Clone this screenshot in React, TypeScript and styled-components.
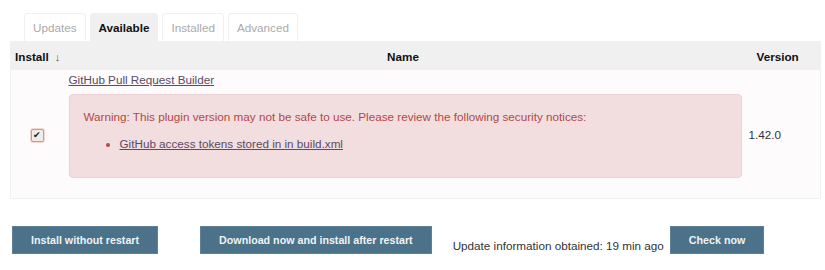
import styled, { createGlobalStyle } from "styled-components"

const Global = createGlobalStyle`
  body {
    margin: 0;
    background: #fff;
    font-family: "Liberation Sans", Arial, sans-serif;
    font-size: 11.7px;
    color: #333;
  }
`

const Page = styled.div`
  padding: 13px 4px 0 10px;
`

const Tabs = styled.div`
  display: flex;
  gap: 4px;
  padding-left: 14px;
`

const Tab = styled.div<{ $active?: boolean }>`
  height: 28px;
  box-sizing: border-box;
  padding: 0 8px;
  display: flex;
  align-items: center;
  border: 1px solid #f0f0f0;
  border-bottom: none;
  border-radius: 4px 4px 0 0;
  background: ${p => (p.$active ? "#f0f0f0" : "#fff")};
  color: ${p => (p.$active ? "#111" : "#aaa")};
  font-weight: ${p => (p.$active ? "bold" : "normal")};
`

const Table = styled.table`
  width: 811px;
  border-collapse: collapse;
  border: 1px solid #f0f0f0;
  table-layout: fixed;
`

const Th = styled.th<{ $align?: string; $pad?: string }>`
  background: #f0f0f0;
  height: 28px;
  padding: ${p => p.$pad || "0 4px"};
  text-align: ${p => p.$align || "left"};
  font-weight: bold;
  color: #111;
  white-space: nowrap;
`

const Arrow = styled.span`
  font-weight: normal;
  font-size: 11px;
  margin-left: 6px;
  color: #555;
`

const Td = styled.td<{ $align?: string }>`
  background: #fdfbfb;
  vertical-align: middle;
  text-align: ${p => p.$align || "left"};
  padding: 0 4px;
`

const NameCell = styled.td`
  background: #fdfbfb;
  padding: 3px 4px 20px 7px;
`

const Link = styled.a`
  color: #5b4a68;
  text-decoration: underline;
  cursor: pointer;
`

const Check = styled.span`
  display: inline-flex;
  align-items: center;
  justify-content: center;
  width: 11px;
  height: 11px;
  margin-left: 2px;
  border: 1px solid #c99a8c;
  border-radius: 2px;
  background: #ececec;
  font-size: 9px;
  color: #222;
  line-height: 1;
  box-shadow: 0 0 0 1px #f1d8d0;
`

const Warning = styled.div`
  margin-top: 8px;
  width: 673px;
  box-sizing: border-box;
  height: 84px;
  background: #f2dede;
  border: 1px solid #ecd2d5;
  border-radius: 4px;
  padding: 15px 14px;
  color: #b0494a;
`

const Notices = styled.ul`
  margin: 14px 0 0;
  padding-left: 36px;
  li::marker {
    color: #b0494a;
  }
`

const Footer = styled.div`
  display: flex;
  align-items: flex-end;
  margin-top: 27px;
  margin-left: 2px;
`

const Button = styled.button<{ $gap?: number }>`
  height: 28px;
  padding: 0 18px;
  margin-right: ${p => p.$gap ?? 0}px;
  background: #4b7289;
  border: 1px solid #5a8198;
  color: #eef2f5;
  font-family: inherit;
  font-size: 10.7px;
  font-weight: bold;
  white-space: nowrap;
  cursor: pointer;
`

const Info = styled.span`
  margin-right: 6px;
  line-height: 1;
  padding-bottom: 2px;
  color: #333;
  white-space: nowrap;
`

export default function App() {
  return (
    <Page>
      <Global />
      <Tabs>
        <Tab>Updates</Tab>
        <Tab $active>Available</Tab>
        <Tab>Installed</Tab>
        <Tab>Advanced</Tab>
      </Tabs>
      <Table>
        <colgroup>
          <col style={{ width: 51 }} />
          <col />
          <col style={{ width: 76 }} />
        </colgroup>
        <thead>
          <tr>
            <Th>
              Install<Arrow>↓</Arrow>
            </Th>
            <Th $align="center">Name</Th>
            <Th $pad="0 0 0 12px">Version</Th>
          </tr>
        </thead>
        <tbody>
          <tr>
            <Td $align="center">
              <Check>✔</Check>
            </Td>
            <NameCell>
              <Link>GitHub Pull Request Builder</Link>
              <Warning>
                Warning: This plugin version may not be safe to use. Please review the following security notices:
                <Notices>
                  <li>
                    <Link>GitHub access tokens stored in in build.xml</Link>
                  </li>
                </Notices>
              </Warning>
            </NameCell>
            <Td>1.42.0</Td>
          </tr>
        </tbody>
      </Table>
      <Footer>
        <Button $gap={42}>Install without restart</Button>
        <Button $gap={21}>Download now and install after restart</Button>
        <Info>Update information obtained: 19 min ago</Info>
        <Button>Check now</Button>
      </Footer>
    </Page>
  )
}
